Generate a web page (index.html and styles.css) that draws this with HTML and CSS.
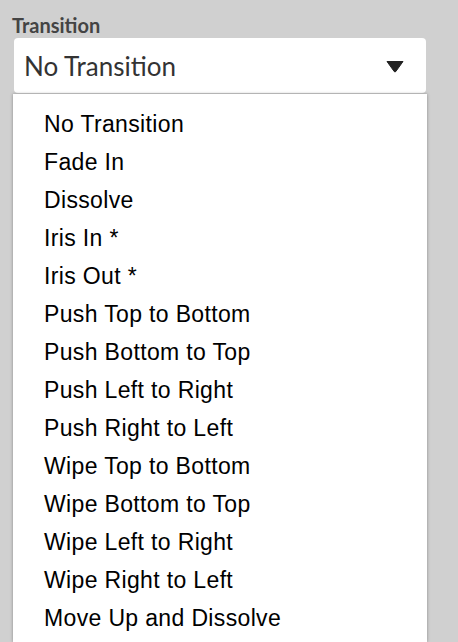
FILE: index.html
```html
<!DOCTYPE html>
<html>
<head>
<meta charset="utf-8">
<link rel="stylesheet" href="styles.css">
</head>
<body>
<div class="field">
  <div class="label">Transition</div>
  <div class="select">
    <span class="value">No Transition</span>
    <svg class="caret" width="18" height="13" viewBox="0 0 18 13"><path d="M1 1.5 H17 L9.8 11.5 Q9 12.5 8.2 11.5 Z" fill="#222" stroke="#222" stroke-width="1" stroke-linejoin="round"/></svg>
  </div>
  <ul class="menu">
    <li>No Transition</li>
    <li>Fade In</li>
    <li>Dissolve</li>
    <li>Iris In *</li>
    <li>Iris Out *</li>
    <li>Push Top to Bottom</li>
    <li>Push Bottom to Top</li>
    <li>Push Left to Right</li>
    <li>Push Right to Left</li>
    <li>Wipe Top to Bottom</li>
    <li>Wipe Bottom to Top</li>
    <li>Wipe Left to Right</li>
    <li>Wipe Right to Left</li>
    <li>Move Up and Dissolve</li>
  </ul>
</div>
</body>
</html>
```
FILE: styles.css
```css
html, body {
  margin: 0;
  padding: 0;
  background: #d0d0d0;
  height: 100%;
  overflow: hidden;
}
.field {
  box-sizing: border-box;
  height: 100%;
  display: flex;
  flex-direction: column;
  padding: 15px 0 0 12px;
  width: 428px;
}
.label {
  font-family: Lato, sans-serif;
  font-weight: 700;
  font-size: 20px;
  color: #444;
  line-height: 20px;
  margin-bottom: 3px;
}
.select {
  margin-left: 2px;
  width: 412px;
  height: 55px;
  flex: none;
  box-sizing: border-box;
  background: #fff;
  border-radius: 4px;
  display: flex;
  align-items: center;
  justify-content: space-between;
  padding: 0 22px 0 10px;
}
.value {
  font-family: Lato, sans-serif;
  font-size: 26px;
  color: #333;
}
.caret {
  display: block;
  margin-top: 2px;
}
.menu {
  flex: 1;
  list-style: none;
  margin: 1px 0 0 1px;
  padding: 11px 0 0 0;
  width: 414px;
  background: #fff;
  box-shadow: 0 0 3px rgba(0,0,0,0.35);
}
.menu li {
  font-family: "Liberation Sans", Arial, sans-serif;
  font-size: 23px;
  line-height: 38px;
  letter-spacing: 0.35px;
  color: #000;
  padding-left: 31px;
}
```
